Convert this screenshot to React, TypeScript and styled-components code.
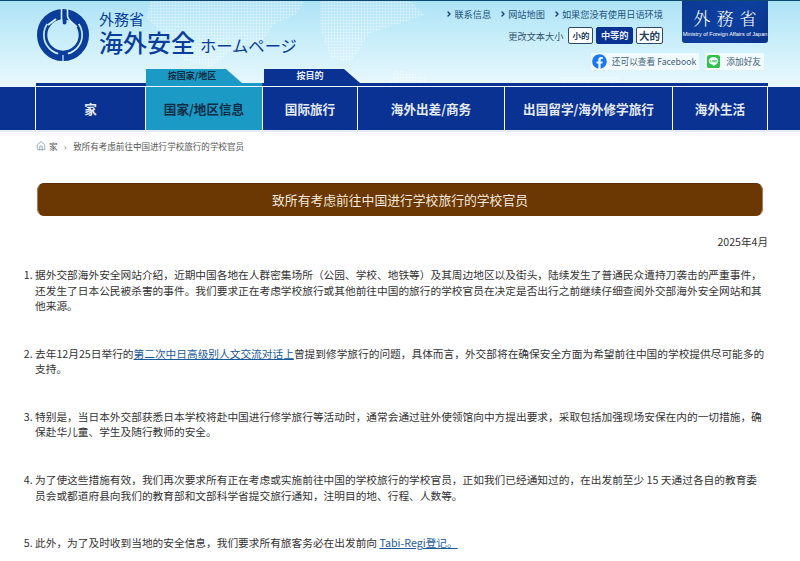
import React from "react";
import styled, { createGlobalStyle } from "styled-components";
import { ChevronRight, House } from "lucide-react";
import { FaFacebook, FaLine } from "react-icons/fa";

const NAVY = "#0a3293";
const TEAL = "#1a9ac4";
const LOGO_BLUE = "#0b3d9b";
const LOGO_GAP = "#d5f1fb";
const CJK = `"Noto Sans CJK SC", "Noto Sans CJK JP", "Liberation Sans", sans-serif`;

const GlobalStyle = createGlobalStyle`
  html, body {
    margin: 0;
    padding: 0;
    height: 561px;
    overflow: hidden;
    background: #fff;
    font-family: ${CJK};
  }
`;

const Header = styled.header`
  position: relative;
  height: 86px;
  border-top: 1px solid #0d4a6e;
  background: linear-gradient(180deg, #aee3f7 0%, #c9eefa 45%, #eaf8fd 100%);
  overflow: hidden;
`;

const MapDots = styled.svg`
  position: absolute;
  left: 0;
  top: 0;
`;

const TopRow = styled.div`
  position: relative;
  display: flex;
  justify-content: space-between;
  height: 68px;
  padding: 0 32px 0 36px;
`;

const Brand = styled.a`
  display: flex;
  align-items: flex-start;
  gap: 9px;
  padding-top: 7px;
  color: ${LOGO_BLUE};
`;

const BrandText = styled.div`
  display: flex;
  flex-direction: column;
  font-family: "Noto Sans CJK JP", sans-serif;
`;

const Ministry = styled.div`
  font-size: 15px;
  line-height: 18px;
  margin-top: 2px;
`;

const SiteName = styled.div`
  display: flex;
  align-items: baseline;
  gap: 5px;
  font-size: 24px;
  line-height: 28px;
  font-weight: 500;
  white-space: nowrap;
`;

const SiteSub = styled.span`
  font-size: 16.3px;
  font-weight: 400;
`;

const RightCol = styled.div`
  display: flex;
  flex-direction: column;
  align-items: flex-end;
`;

const ToolRow = styled.div`
  display: flex;
  gap: 19px;
`;

const Tools = styled.div`
  display: flex;
  flex-direction: column;
  align-items: flex-end;
  gap: 6px;
  padding-top: 6px;
`;

const UtilLinks = styled.div`
  display: flex;
  gap: 9px;
`;

const UtilLink = styled.a`
  display: flex;
  align-items: center;
  gap: 1px;
  font-size: 9.2px;
  line-height: 14px;
  color: #22557f;
  white-space: nowrap;
  svg {
    color: #123a6b;
    margin-left: -1px;
  }
`;

const SizeRow = styled.div`
  display: flex;
  align-items: center;
  gap: 3px;
  font-size: 9.2px;
  color: #33536e;
`;

const SizeLabel = styled.span`
  margin-right: 2px;
`;

const SizeButton = styled.button<{ $active?: boolean; $font: number; $pad: number }>`
  height: 17px;
  padding: 0 ${(p) => p.$pad}px;
  margin: 0;
  font-family: ${CJK};
  font-size: ${(p) => p.$font}px;
  font-weight: 700;
  line-height: 15px;
  border-radius: 2px;
  border: 1px solid ${(p) => (p.$active ? NAVY : "#2f4a66")};
  background: ${(p) => (p.$active ? NAVY : "#fff")};
  color: ${(p) => (p.$active ? "#e8eef8" : "#24405c")};
`;

const MofaBadge = styled.a`
  display: flex;
  flex-direction: column;
  align-items: center;
  width: 86px;
  height: 42px;
  border-radius: 0 0 3px 3px;
  background: linear-gradient(135deg, #0a3a94 0%, #0d3f9f 55%, #0a3287 100%);
  color: #fff;
`;

const MofaKanji = styled.span`
  font-family: "Noto Serif CJK JP", "Noto Sans CJK JP", serif;
  font-size: 17px;
  line-height: 22px;
  letter-spacing: 6px;
  margin: 6px 0 0 6px;
  font-weight: 300;
`;

const MofaEnglish = styled.span`
  font-family: "Liberation Sans", sans-serif;
  font-size: 5.5px;
  line-height: 10px;
  white-space: nowrap;
`;

const Socials = styled.div`
  display: flex;
  gap: 6px;
  margin: 9px 4px 0 0;
`;

const SocialLink = styled.a`
  display: flex;
  align-items: center;
  gap: 5px;
  height: 17px;
  padding: 0 3px 0 1px;
  font-size: 8.7px;
  color: #44607a;
  background: rgba(255, 255, 255, 0.65);
  white-space: nowrap;
`;

const TabRow = styled.div`
  position: relative;
  display: flex;
  height: 17px;
  margin: 0 32px 0 36px;
  padding-left: 110px;
  box-sizing: border-box;
  border-bottom: 3px solid ${NAVY};
`;

const TabSlot = styled.div<{ $width: number; $active?: boolean }>`
  width: ${(p) => p.$width}px;
  height: 17px;
  box-sizing: border-box;
  border-bottom: 3px solid ${(p) => (p.$active ? TEAL : NAVY)};
  margin-right: 2px;
`;

const Tab = styled.div<{ $active?: boolean }>`
  width: 96px;
  height: 14px;
  padding-right: 4px;
  box-sizing: border-box;
  text-align: center;
  font-size: 9px;
  line-height: 14px;
  font-weight: 700;
  clip-path: polygon(0 0, 80px 0, 96px 100%, 0 100%);
  background: ${(p) => (p.$active ? TEAL : NAVY)};
  color: ${(p) => (p.$active ? "#0f2c45" : "#e8eef8")};
`;

const Nav = styled.nav`
  display: grid;
  grid-template-columns: 35px 109px 116px 94px 146px 167px 94px 1fr;
  column-gap: 1px;
  height: 43px;
  background: #fff;
  border-bottom: 2px solid #e6ebf7;
`;

const NavItem = styled.a<{ $active?: boolean }>`
  display: flex;
  align-items: center;
  justify-content: center;
  font-size: 12.6px;
  font-weight: 700;
  white-space: nowrap;
  background: ${(p) => (p.$active ? TEAL : NAVY)};
  color: ${(p) => (p.$active ? "#0f2c45" : "#e4eaf5")};
`;

const Breadcrumb = styled.div`
  display: flex;
  align-items: center;
  height: 12px;
  margin: 8px 0 0 36px;
  font-size: 8.55px;
  line-height: 12px;
  color: #555;
  svg {
    color: #5a7890;
    margin-right: 3px;
  }
`;

const Crumb = styled.a`
  color: #555;
`;

const CrumbSep = styled.span`
  margin: 0 6.5px;
`;

const Main = styled.main`
  padding: 31px 32px 0 37px;
`;

const TitleBar = styled.h1`
  margin: 0 5px 0 0;
  height: 33px;
  box-sizing: border-box;
  border: 1px solid #a27a55;
  border-top-color: #5a3008;
  border-bottom-color: #6b3703;
  border-radius: 7px;
  background: #6b3703;
  color: #f3eadb;
  font-size: 12.8px;
  font-weight: 400;
  line-height: 31px;
  text-align: center;
`;

const DateLine = styled.p`
  margin: 18px 0 0;
  font-size: 10.6px;
  line-height: 16px;
  text-align: right;
  color: #333;
`;

const Notes = styled.ol`
  margin: 17px 2px 0 -2px;
  padding: 0;
  list-style-position: outside;
  font-size: 10.7px;
  line-height: 15.5px;
  color: #333;
`;

const Note = styled.li`
  margin-bottom: 32.2px;
  &:last-child {
    margin-bottom: 0;
  }
`;

const TextLink = styled.a`
  color: #1a5a9a;
  text-decoration: underline;
`;

const Logo = () => (
  <svg width="54" height="54" viewBox="0 0 54 54">
    <g fill="none" stroke={LOGO_BLUE}>
      <circle cx="27" cy="27" r="23" strokeWidth="6" />
      <circle cx="27" cy="27" r="17" strokeWidth="2.6" />
      <path d="M10.6 15.5A20 20 0 0 1 43.4 15.5" strokeWidth="8" />
      <path d="M22 46.3A20 20 0 0 0 32 46.3" strokeWidth="8" />
    </g>
    <path d="M26.5 8h4v6.5a2 2 0 0 1-4 0z" fill={LOGO_BLUE} />
    <g fill="none" stroke={LOGO_GAP}>
      <path d="M25.5 0.5V16" strokeWidth="1.6" />
      <path d="M31.5 0.5V8C31.5 12 36 14 41 19" strokeWidth="1.6" />
      <path d="M12 17L20 11" strokeWidth="2" />
      <path d="M27 47V54" strokeWidth="1.2" />
    </g>
  </svg>
);

const WorldMap = () => (
  <MapDots width="800" height="86" aria-hidden="true">
    <defs>
      <pattern id="dots" width="3" height="3" patternUnits="userSpaceOnUse">
        <circle cx="1.5" cy="1.5" r="1" fill="#fff" />
      </pattern>
    </defs>
    <g fill="url(#dots)" opacity="0.55">
      <path d="M150 0h155l-10 14-22 10-10 16-30 8-22 18-26-6-20-26-18-16z" />
      <path d="M320 0h90l15 14-30 10-25 8-20 30-20-6-10-30z" />
      <path d="M395 68l30 8 4 10h-40z" />
      <path d="M560 76h60v10h-60z" />
    </g>
  </MapDots>
);

const navItems = ["家", "国家/地区信息", "国际旅行", "海外出差/商务", "出国留学/海外修学旅行", "海外生活"];

const App = () => (
  <>
    <GlobalStyle />
    <Header>
      <WorldMap />
      <TopRow>
        <Brand>
          <Logo />
          <BrandText>
            <Ministry>外務省</Ministry>
            <SiteName>
              海外安全
              <SiteSub>ホームページ</SiteSub>
            </SiteName>
          </BrandText>
        </Brand>
        <RightCol>
          <ToolRow>
            <Tools>
              <UtilLinks>
                {["联系信息", "网站地图", "如果您没有使用日语环境"].map((label) => (
                  <UtilLink key={label}>
                    <ChevronRight size={8} strokeWidth={4} />
                    {label}
                  </UtilLink>
                ))}
              </UtilLinks>
              <SizeRow>
                <SizeLabel>更改文本大小</SizeLabel>
                <SizeButton $font={8.5} $pad={3}>小的</SizeButton>
                <SizeButton $active $font={9.2} $pad={3.5}>中等的</SizeButton>
                <SizeButton $font={10.5} $pad={2}>大的</SizeButton>
              </SizeRow>
            </Tools>
            <MofaBadge>
              <MofaKanji>外務省</MofaKanji>
              <MofaEnglish>Ministry of Foreign Affairs of Japan</MofaEnglish>
            </MofaBadge>
          </ToolRow>
          <Socials>
            <SocialLink>
              <FaFacebook size={15} color="#1877f2" />
              还可以查看 Facebook
            </SocialLink>
            <SocialLink>
              <FaLine size={15} color="#2fc24a" />
              添加好友
            </SocialLink>
          </Socials>
        </RightCol>
      </TopRow>
      <TabRow>
        <TabSlot $width={116} $active>
          <Tab $active>按国家/地区</Tab>
        </TabSlot>
        <TabSlot $width={96}>
          <Tab>按目的</Tab>
        </TabSlot>
      </TabRow>
    </Header>
    <Nav>
      <NavItem />
      {navItems.map((label) => (
        <NavItem key={label} $active={label === "国家/地区信息"}>
          {label}
        </NavItem>
      ))}
      <NavItem />
    </Nav>
    <Breadcrumb>
      <House size={10} strokeWidth={1.5} />
      <Crumb>家</Crumb>
      <CrumbSep>›</CrumbSep>
      致所有考虑前往中国进行学校旅行的学校官员
    </Breadcrumb>
    <Main>
      <TitleBar>致所有考虑前往中国进行学校旅行的学校官员</TitleBar>
      <DateLine>2025年4月</DateLine>
      <Notes>
        <Note>
          据外交部海外安全网站介绍，近期中国各地在人群密集场所（公园、学校、地铁等）及其周边地区以及街头，陆续发生了普通民众遭持刀袭击的严重事件，还发生了日本公民被杀害的事件。我们要求正在考虑学校旅行或其他前往中国的旅行的学校官员在决定是否出行之前继续仔细查阅外交部海外安全网站和其他来源。
        </Note>
        <Note>
          去年12月25日举行的<TextLink>第二次中日高级别人文交流对话上</TextLink>曾提到修学旅行的问题，具体而言，外交部将在确保安全方面为希望前往中国的学校提供尽可能多的支持。
        </Note>
        <Note>
          特别是，当日本外交部获悉日本学校将赴中国进行修学旅行等活动时，通常会通过驻外使领馆向中方提出要求，采取包括加强现场安保在内的一切措施，确保赴华儿童、学生及随行教师的安全。
        </Note>
        <Note>
          为了使这些措施有效，我们再次要求所有正在考虑或实施前往中国的学校旅行的学校官员，正如我们已经通知过的，在出发前至少 15 天通过各自的教育委员会或都道府县向我们的教育部和文部科学省提交旅行通知，注明目的地、行程、人数等。
        </Note>
        <Note>
          此外，为了及时收到当地的安全信息，我们要求所有旅客务必在出发前向 <TextLink>Tabi-Regi登记。</TextLink>
        </Note>
      </Notes>
    </Main>
  </>
);

export default App;
